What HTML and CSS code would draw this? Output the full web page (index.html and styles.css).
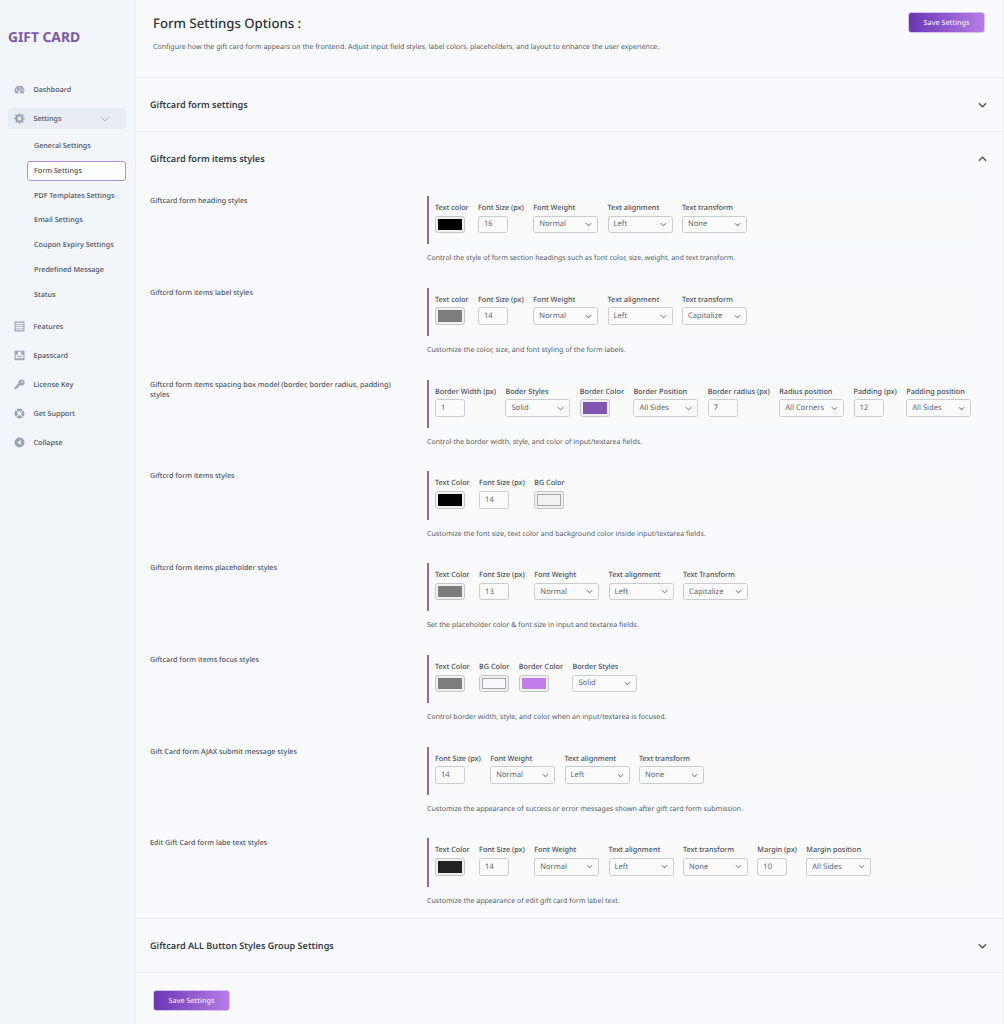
FILE: index.html
```html
<!DOCTYPE html>
<html lang="en">
<head>
<meta charset="utf-8">
<title>Form Settings</title>
<link rel="stylesheet" href="styles.css">
</head>
<body>
<div class="app">
<aside class="sidebar">
  <div class="logo">GIFT CARD</div>
  <nav class="menu">
    <a class="item"><svg class="ico" viewBox="0 0 20 20"><path d="M10 3a9 9 0 0 0-9 9c0 2 .6 3.500 1.500 5h15c.9-1.500 1.500-3 1.500-5a9 9 0 0 0-9-9zm0 2.500a1.200 1.200 0 1 1 0 2.400 1.200 1.200 0 0 1 0-2.400zM5 8a1.200 1.200 0 1 1 0 2.400A1.200 1.200 0 0 1 5 8zm10 0a1.200 1.200 0 1 1 0 2.400A1.200 1.200 0 0 1 15 8zM3.500 12a1.200 1.200 0 1 1 2.400 0 1.200 1.200 0 0 1-2.400 0zm13 1.200a1.200 1.200 0 1 1 0-2.400 1.200 1.200 0 0 1 0 2.400zM13 7.500l-2 5.100a2 2 0 1 1-1.600-.6z"/></svg>Dashboard</a>
    <a class="item open"><svg class="ico" viewBox="0 0 20 20"><path d="M8.500 1h3l.5 2.600 1.500.6 2.200-1.500 2.100 2.100-1.500 2.200.6 1.500 2.600.5v3l-2.600.5-.6 1.500 1.500 2.200-2.100 2.100-2.200-1.500-1.500.6-.5 2.600h-3L8 17.400l-1.500-.6-2.200 1.500-2.100-2.100 1.500-2.200-.6-1.500L0 12V9l2.600-.5.6-1.500-1.500-2.200 2.100-2.100 2.200 1.500L8 3.600zM10 7a3.500 3.500 0 1 0 0 7 3.500 3.500 0 0 0 0-7z" transform="translate(0 -.5)"/></svg>Settings<svg class="caret" viewBox="0 0 12 7"><path d="M1 1l5 5 5-5"/></svg></a>
    <div class="sub">
      <a class="subitem">General Settings</a>
      <a class="subitem current">Form Settings</a>
      <a class="subitem">PDF Templates Settings</a>
      <a class="subitem">Email Settings</a>
      <a class="subitem">Coupon Expiry Settings</a>
      <a class="subitem">Predefined Message</a>
      <a class="subitem">Status</a>
    </div>
    <a class="item"><svg class="ico" viewBox="0 0 20 20"><path d="M1 1h18v18H1zm2 2v2.500h14V3zm0 4v2.500h14V7zm0 4v2.500h14V11zm0 4v2h14v-2z" fill-rule="evenodd"/></svg>Features</a>
    <a class="item"><svg class="ico" viewBox="0 0 20 20"><path d="M1 1.500h18v17H1zM7 3v5.500H3V15h14V8.500h-4V3zM5 12.500l3-2.500 2.500 1.500 2-1.500 2.500 2.500z" fill-rule="evenodd"/></svg>Epasscard</a>
    <a class="item"><svg class="ico" viewBox="0 0 20 20"><path d="M13.500 1a5.500 5.500 0 0 0-5.200 7.300L1.400 15.200a2 2 0 0 0 2.900 2.900l6.900-6.800A5.500 5.500 0 1 0 13.500 1zm1.300 2.500a1.700 1.700 0 1 1 0 3.400 1.700 1.700 0 0 1 0-3.400z" fill-rule="evenodd"/></svg>License Key</a>
    <a class="item"><svg class="ico" viewBox="0 0 20 20"><circle cx="10" cy="10" r="9"/><circle class="gap" cx="10" cy="10" r="3.800"/><path class="gap-line" d="M3.600 3.600l12.800 12.800M16.400 3.600L3.600 16.400"/></svg>Get Support</a>
    <a class="item"><svg class="ico" viewBox="0 0 20 20"><path fill-rule="evenodd" d="M10 1a9 9 0 1 0 0 18 9 9 0 0 0 0-18zm2.500 4.500v9L6 10z"/></svg>Collapse</a>
  </nav>
</aside>
<main class="main">
  <header class="top">
    <div class="top-text">
      <h1 class="title">Form Settings Options :</h1>
      <p class="intro">Configure how the gift card form appears on the frontend. Adjust input field styles, label colors, placeholders, and layout to enhance the user experience.</p>
    </div>
    <button class="save">Save Settings</button>
  </header>

  <section class="sec closed">
    <h2 class="sec-title">Giftcard form settings</h2>
    <svg class="chev" viewBox="0 0 10 6"><path d="M1 1l4 4 4-4"/></svg>
  </section>

  <section class="sec open-sec">
    <div class="sec-head">
      <h2 class="sec-title">Giftcard form items styles</h2>
      <svg class="chev" viewBox="0 0 10 6"><path d="M1 5l4-4 4 4"/></svg>
    </div>
    <div class="rows">

      <div class="row">
        <div class="row-label">Giftcard form heading styles</div>
        <div class="row-body">
          <div class="panel">
            <div class="fld"><label>Text color</label><div class="sw"><i class="c-black"></i></div></div>
            <div class="fld"><label>Font Size (px)</label><input class="num" value="16"></div>
            <div class="fld"><label>Font Weight</label><select class="sel"><option>Normal</option></select></div>
            <div class="fld"><label>Text alignment</label><select class="sel"><option>Left</option></select></div>
            <div class="fld"><label>Text transform</label><select class="sel"><option>None</option></select></div>
          </div>
          <p class="hint">Control the style of form section headings such as font color, size, weight, and text transform.</p>
        </div>
      </div>

      <div class="row">
        <div class="row-label">Giftcrd form items label styles</div>
        <div class="row-body">
          <div class="panel">
            <div class="fld"><label>Text color</label><div class="sw"><i class="c-gray"></i></div></div>
            <div class="fld"><label>Font Size (px)</label><input class="num" value="14"></div>
            <div class="fld"><label>Font Weight</label><select class="sel"><option>Normal</option></select></div>
            <div class="fld"><label>Text alignment</label><select class="sel"><option>Left</option></select></div>
            <div class="fld"><label>Text transform</label><select class="sel"><option>Capitalize</option></select></div>
          </div>
          <p class="hint">Customize the color, size, and font styling of the form labels.</p>
        </div>
      </div>

      <div class="row">
        <div class="row-label">Giftcrd form items spacing box model (border, border radius, padding) styles</div>
        <div class="row-body">
          <div class="panel">
            <div class="fld"><label>Border Width (px)</label><input class="num" value="1"></div>
            <div class="fld"><label>Boder Styles</label><select class="sel"><option>Solid</option></select></div>
            <div class="fld"><label>Border Color</label><div class="sw"><i class="c-purple"></i></div></div>
            <div class="fld"><label>Border Position</label><select class="sel"><option>All Sides</option></select></div>
            <div class="fld"><label>Border radius (px)</label><input class="num" value="7"></div>
            <div class="fld"><label>Radius position</label><select class="sel"><option>All Corners</option></select></div>
            <div class="fld"><label>Padding (px)</label><input class="num" value="12"></div>
            <div class="fld"><label>Padding position</label><select class="sel"><option>All Sides</option></select></div>
          </div>
          <p class="hint">Control the border width, style, and color of input/textarea fields.</p>
        </div>
      </div>

      <div class="row">
        <div class="row-label">Giftcrd form items styles</div>
        <div class="row-body">
          <div class="panel">
            <div class="fld"><label>Text Color</label><div class="sw"><i class="c-black"></i></div></div>
            <div class="fld"><label>Font Size (px)</label><input class="num" value="14"></div>
            <div class="fld"><label>BG Color</label><div class="sw"><i class="c-light"></i></div></div>
          </div>
          <p class="hint">Customize the font size, text color and background color inside input/textarea fields.</p>
        </div>
      </div>

      <div class="row">
        <div class="row-label">Giftcrd form items placeholder styles</div>
        <div class="row-body">
          <div class="panel">
            <div class="fld"><label>Text Color</label><div class="sw"><i class="c-gray"></i></div></div>
            <div class="fld"><label>Font Size (px)</label><input class="num" value="13"></div>
            <div class="fld"><label>Font Weight</label><select class="sel"><option>Normal</option></select></div>
            <div class="fld"><label>Text alignment</label><select class="sel"><option>Left</option></select></div>
            <div class="fld"><label>Text Transform</label><select class="sel"><option>Capitalize</option></select></div>
          </div>
          <p class="hint">Set the placeholder color &amp; font size in input and textarea fields.</p>
        </div>
      </div>

      <div class="row">
        <div class="row-label">Giftcard form items focus styles</div>
        <div class="row-body">
          <div class="panel">
            <div class="fld"><label>Text Color</label><div class="sw"><i class="c-gray"></i></div></div>
            <div class="fld"><label>BG Color</label><div class="sw"><i class="c-white"></i></div></div>
            <div class="fld"><label>Border Color</label><div class="sw"><i class="c-lilac"></i></div></div>
            <div class="fld"><label>Border Styles</label><select class="sel"><option>Solid</option></select></div>
          </div>
          <p class="hint">Control border width, style, and color when an input/textarea is focused.</p>
        </div>
      </div>

      <div class="row">
        <div class="row-label">Gift Card form AJAX submit message styles</div>
        <div class="row-body">
          <div class="panel">
            <div class="fld"><label>Font Size (px)</label><input class="num" value="14"></div>
            <div class="fld"><label>Font Weight</label><select class="sel"><option>Normal</option></select></div>
            <div class="fld"><label>Text alignment</label><select class="sel"><option>Left</option></select></div>
            <div class="fld"><label>Text transform</label><select class="sel"><option>None</option></select></div>
          </div>
          <p class="hint">Customize the appearance of success or error messages shown after gift card form submission.</p>
        </div>
      </div>

      <div class="row">
        <div class="row-label">Edit Gift Card form labe text styles</div>
        <div class="row-body">
          <div class="panel">
            <div class="fld"><label>Text Color</label><div class="sw"><i class="c-dark"></i></div></div>
            <div class="fld"><label>Font Size (px)</label><input class="num" value="14"></div>
            <div class="fld"><label>Font Weight</label><select class="sel"><option>Normal</option></select></div>
            <div class="fld"><label>Text alignment</label><select class="sel"><option>Left</option></select></div>
            <div class="fld"><label>Text transform</label><select class="sel"><option>None</option></select></div>
            <div class="fld"><label>Margin (px)</label><input class="num" value="10"></div>
            <div class="fld"><label>Margin position</label><select class="sel"><option>All Sides</option></select></div>
          </div>
          <p class="hint">Customize the appearance of edit gift card form label text.</p>
        </div>
      </div>

    </div>
  </section>

  <section class="sec closed">
    <h2 class="sec-title">Giftcard ALL Button Styles Group Settings</h2>
    <svg class="chev" viewBox="0 0 10 6"><path d="M1 1l4 4 4-4"/></svg>
  </section>

  <footer class="foot"><button class="save">Save Settings</button></footer>
</main>
</div>
</body>
</html>
```

FILE: styles.css
```css
* { box-sizing: border-box; }
html, body { margin: 0; padding: 0; }
body {
  font-family: "Noto Sans", sans-serif;
  background: #f9fafd;
  color: #3c434a;
  text-rendering: geometricPrecision;
}
.app { display: flex; width: 1004px; height: 1024px; overflow: hidden; }

/* sidebar */
.sidebar {
  width: 136px;
  flex: none;
  background: #f2f5fa;
  padding: 0 9px 0 8px;
  border-right: 1px solid #eef0f5;
}
.logo {
  margin-top: 28px;
  height: 19px;
  line-height: 19px;
  font-size: 13.8px;
  font-weight: 700;
  color: #7b57a9;
}
.menu { margin-top: 32px; display: flex; flex-direction: column; }
.item {
  display: flex;
  align-items: center;
  height: 21px;
  margin-bottom: 8px;
  padding: 1px 0 0 6px;
  font-size: 7.2px;
  font-weight: 500;
  color: #4a5261;
  border-radius: 3px;
}
.item.open { background: #e8ecf3; margin-bottom: 7px; }
.ico { width: 11px; height: 11px; margin: -1px 8.500px 0 0; fill: #9aa6ba; flex: none; }
.gap { fill: #f2f5fa; }
.gap-line { fill: none; stroke: #f2f5fa; stroke-width: 1.8; }
.caret { width: 10px; height: 6px; margin-left: auto; margin-right: 16px; fill: none; stroke: #a4aebe; stroke-width: 1.1; }
.sub { display: flex; flex-direction: column; padding-left: 19px; margin-bottom: 6.4px; }
.subitem {
  height: 20.5px;
  margin-bottom: 4.3px;
  padding-left: 6px;
  font-size: 7.2px;
  font-weight: 500;
  line-height: 19.5px;
  color: #4a5261;
  border: 1px solid transparent;
  border-radius: 3px;
}
.subitem.current { background: #fdfdff; border-color: #b48fdc; }

/* main */
.main { flex: 1; min-width: 0; display: flex; flex-direction: column; border-right: 1px solid #eef0f5; }
.top {
  height: 78px;
  padding: 12px 18px 0 17px;
  display: flex;
  justify-content: space-between;
  align-items: flex-start;
  border-bottom: 1px solid #e9ebf0;
}
.title { margin: 0; font-size: 13.2px; line-height: 22px; font-weight: 500; color: #2c3338; }
.intro { margin: 7.5px 0 0; font-size: 7.06px; line-height: 11px; color: #555c65; }
.save {
  display: block;
  width: 77px;
  height: 21px;
  padding: 0;
  font: 500 7.2px "Noto Sans", sans-serif;
  text-rendering: geometricPrecision;
  color: #f1e9fa;
  background: linear-gradient(90deg, #6a36b4, #b57ee6);
  border: 1px solid #d5c2ee;
  border-radius: 3px;
}
.sec { border-bottom: 1px solid #e9ebf0; padding: 0 16px 0 14px; }
.sec-title { margin: 0; font-size: 9.1px; line-height: 14px; font-weight: 600; color: #343b45; }
.chev { width: 9px; height: 6px; fill: none; stroke: #4b5360; stroke-width: 1.5; flex: none; }
.closed { height: 54px; display: flex; justify-content: space-between; align-items: center; }
.open-sec { height: 787px; }
.sec-head { height: 53px; display: flex; justify-content: space-between; align-items: center; }
.rows { margin-top: 11px; display: flex; flex-direction: column; gap: 23.6px; }
.row { display: grid; grid-template-columns: 277px 1fr; }
.row-label { font-size: 7.2px; line-height: 10px; font-weight: 500; color: #4d5460; padding-right: 30px; }
.panel {
  height: 48.2px;
  width: 553px;
  padding: 7px 8px 0 6px;
  display: flex;
  gap: 9.4px;
  border-left: 2px solid #9266bf;
  background: #fafafb;
}
.fld { display: flex; flex-direction: column; align-items: flex-start; flex: none; }
.fld label { font-size: 7.25px; line-height: 10px; font-weight: 500; color: #474e59; margin-bottom: 2.7px; white-space: nowrap; }
.num, .sel {
  height: 17.500px;
  font: 400 7.6px "Noto Sans", sans-serif;
  text-rendering: geometricPrecision;
  color: #5f666e;
  background-color: #fbfbfc;
  border: 1px solid #c9ccd1;
  border-radius: 2.5px;
  outline: none;
}
.num { width: 30px; padding: 0 5px; }
.sel {
  width: 65px;
  padding: 0 12px 0 5px;
  appearance: none;
  -webkit-appearance: none;
  background-image: url("data:image/svg+xml,%3Csvg xmlns='http://www.w3.org/2000/svg' viewBox='0 0 8 5'%3E%3Cpath d='M1 1l3 3 3-3' fill='none' stroke='%2350575e' stroke-width='1'/%3E%3C/svg%3E");
  background-repeat: no-repeat;
  background-position: right 5px center;
  background-size: 7px 5px;
}
.sw {
  width: 30px;
  height: 17.500px;
  padding: 2px;
  border: 1px solid #c4c6cb;
  border-radius: 2.5px;
  background: #f0f0f1;
}
.sw i { display: block; width: 100%; height: 100%; }
.c-black { background: #000; }
.c-gray { background: #7d7d7d; }
.c-purple { background: #8454b3; }
.c-light { background: #f2f2f2; border: 1px solid #a8a8a8; }
.c-white { background: #f9fafe; border: 1px solid #a8a8a8; }
.c-lilac { background: #c07fe6; }
.c-dark { background: #222; }
.hint { margin: 9px 0 0; font-size: 7.06px; line-height: 11px; color: #555c65; }
.foot { padding: 17px 0 0 17px; }
```
